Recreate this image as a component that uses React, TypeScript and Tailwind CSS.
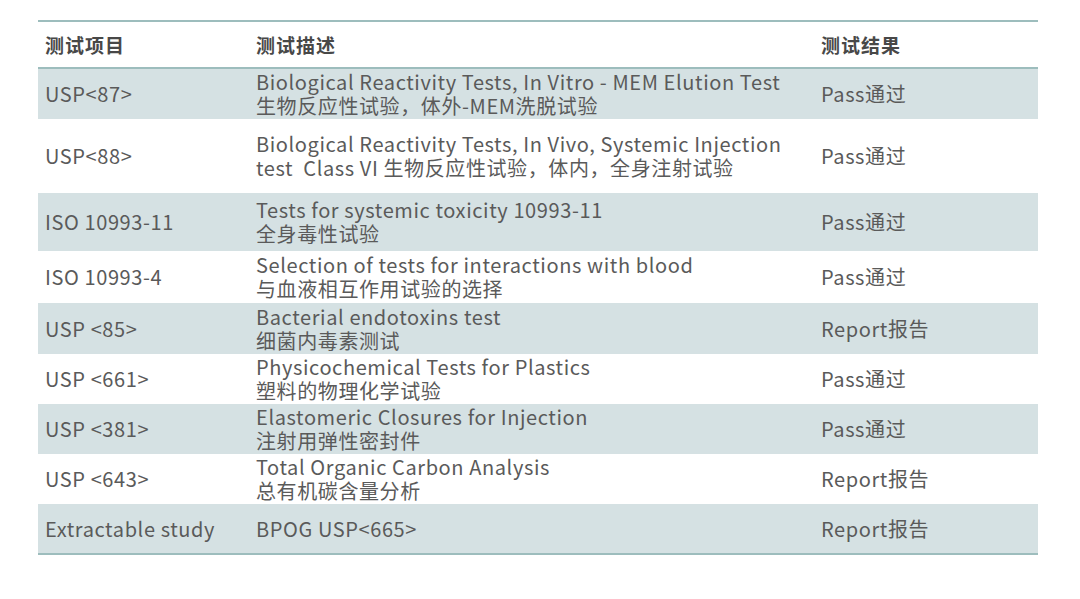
const rows = [
  {
    item: 'USP<87>',
    desc: ['Biological Reactivity Tests, In Vitro - MEM Elution Test', '生物反应性试验，体外-MEM洗脱试验'],
    result: 'Pass通过',
    h: 'h-[50px]',
  },
  {
    item: 'USP<88>',
    desc: ['Biological Reactivity Tests, In Vivo, Systemic Injection', 'test  Class VI 生物反应性试验，体内，全身注射试验'],
    result: 'Pass通过',
    h: 'h-[74px]',
  },
  {
    item: 'ISO 10993-11',
    desc: ['Tests for systemic toxicity 10993-11', '全身毒性试验'],
    result: 'Pass通过',
    h: 'h-[58px]',
  },
  {
    item: 'ISO 10993-4',
    desc: ['Selection of tests for interactions with blood', '与血液相互作用试验的选择'],
    result: 'Pass通过',
    h: 'h-[52px]',
  },
  {
    item: 'USP <85>',
    desc: ['Bacterial endotoxins test', '细菌内毒素测试'],
    result: 'Report报告',
    h: 'h-[51px]',
  },
  {
    item: 'USP <661>',
    desc: ['Physicochemical Tests for Plastics', '塑料的物理化学试验'],
    result: 'Pass通过',
    h: 'h-[50px]',
  },
  {
    item: 'USP <381>',
    desc: ['Elastomeric Closures for Injection', '注射用弹性密封件'],
    result: 'Pass通过',
    h: 'h-[50px]',
  },
  {
    item: 'USP <643>',
    desc: ['Total Organic Carbon Analysis', '总有机碳含量分析'],
    result: 'Report报告',
    h: 'h-[50px]',
  },
  {
    item: 'Extractable study',
    desc: ['BPOG USP<665>'],
    result: 'Report报告',
    h: 'h-[49px]',
  },
];

export default function App() {
  return (
    <div
      className="w-[1080px] h-[599px] bg-white pt-[20px] pl-[38px]"
      style={{ fontFamily: '"Noto Sans CJK SC", "Noto Sans", sans-serif' }}
    >
      <div className="w-[1000px] border-t-2 border-b-2 border-[#9dbdbd] text-[20px] leading-[24px] tracking-[0.6px] text-[#5a5a5a]">
        {/* Header */}
        <div className="grid grid-cols-[211px_565px_224px] h-[47px] items-center border-b-2 border-[#9dbdbd] font-bold text-[#484848] text-[19px] tracking-[1px]">
          <div className="pl-[7px]">测试项目</div>
          <div className="pl-[7px]">测试描述</div>
          <div className="pl-[7px]">测试结果</div>
        </div>

        {/* Body */}
        {rows.map((r, i) => (
          <div
            key={r.item}
            className={`grid grid-cols-[211px_565px_224px] items-center ${r.h} ${i % 2 === 0 ? 'bg-[#d5e1e3]' : 'bg-white'}`}
          >
            <div className="pl-[7px]">{r.item}</div>
            <div className="pl-[7px] whitespace-pre">
              {r.desc.map((line) => (
                <div key={line}>{line}</div>
              ))}
            </div>
            <div className="pl-[7px]">{r.result}</div>
          </div>
        ))}
      </div>
    </div>
  );
}
